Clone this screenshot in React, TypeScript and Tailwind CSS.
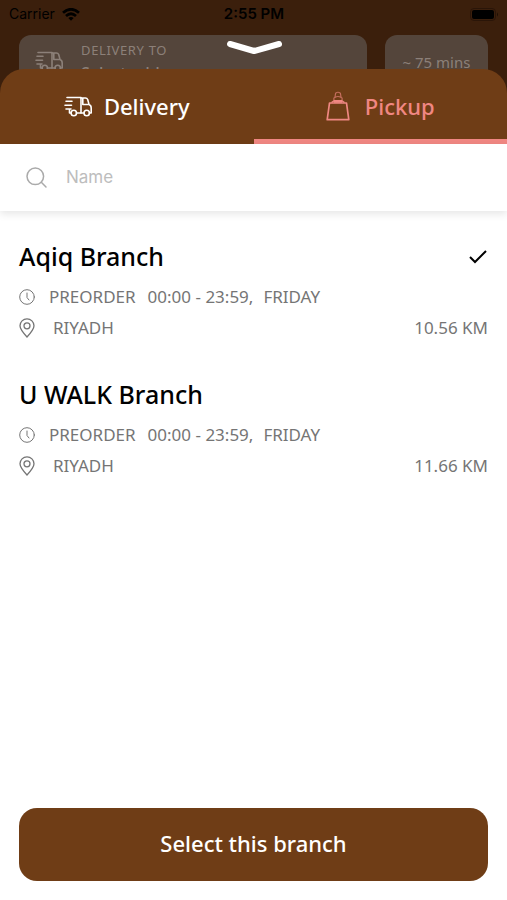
import { useState } from "react";

const branches = [
  { id: "aqiq", name: "Aqiq Branch", city: "RIYADH", hours: "00:00 - 23:59,", day: "FRIDAY", distance: "10.56 KM" },
  { id: "uwalk", name: "U WALK Branch", city: "RIYADH", hours: "00:00 - 23:59,", day: "FRIDAY", distance: "11.66 KM" },
];

function TruckIcon() {
  return (
    <svg viewBox="0 0 28 21" className="h-[21px] w-7 shrink-0" fill="none" stroke="currentColor" strokeWidth="1.6" strokeLinecap="round" strokeLinejoin="round" aria-hidden="true">
      <path d="M3 1.5H17V17H12.5M2 5.3H8M1 9.2H7.5M2 13H7M5.5 13V17H7" />
      <path d="M17 2H21.5Q23 2 23.7 3.5L25 8.4Q27.2 9.2 27.2 12V17H25.5M17 17H20M18.8 2V8.5H25" />
      <circle cx="9.8" cy="17" r="2.7" />
      <circle cx="22.7" cy="17" r="2.7" />
    </svg>
  );
}

function BagIcon() {
  return (
    <svg viewBox="0 0 24 30" className="h-[30px] w-6 shrink-0" fill="none" stroke="currentColor" strokeLinejoin="round" aria-hidden="true">
      <path d="M3.5 12H20.5L22.8 28.7H1.2Z" strokeWidth="1.7" />
      <path d="M5.5 11.5L8 9.8H16L18.5 11.5M8 11H16" strokeWidth="1.4" />
      <path d="M8.2 9.5Q7.2 7 9 6L9.6 2.3Q12 .2 14.4 2.3L15 6Q16.8 7 15.8 9.5M9 6.5Q12 4.5 15 6.5" strokeWidth="1.2" opacity=".65" />
    </svg>
  );
}

function WifiIcon() {
  return (
    <svg viewBox="0 0 18 13" className="h-[13px] w-[18px]" fill="none" stroke="currentColor" strokeWidth="2.8" aria-hidden="true">
      <path d="M1 4.8Q9-2.2 17 4.8M4 8Q9 3.6 14 8" />
      <path d="M6.3 10Q9 7.8 11.7 10L9 12.8Z" fill="currentColor" stroke="none" />
    </svg>
  );
}

function BatteryIcon() {
  return (
    <svg viewBox="0 0 29 13" className="h-[13px] w-[29px]" aria-hidden="true">
      <rect x=".5" y=".5" width="25" height="12" rx="3.5" fill="none" stroke="#2a1508" />
      <rect x="2" y="2" width="22" height="9" rx="2" fill="#000" />
      <path d="M27 4.5Q29 6.5 27 8.5Z" fill="#1d0f05" />
    </svg>
  );
}

function SearchIcon() {
  return (
    <svg viewBox="0 0 22 22" className="size-[22px] shrink-0 text-[#aaaaaa]" fill="none" stroke="currentColor" strokeWidth="1.5" strokeLinecap="round" aria-hidden="true">
      <circle cx="9.3" cy="9.3" r="8.3" />
      <path d="M15.3 15.3L20 20" />
    </svg>
  );
}

function ClockIcon() {
  return (
    <svg viewBox="0 0 16 16" className="size-4 shrink-0" fill="none" stroke="currentColor" strokeLinecap="round" aria-hidden="true">
      <circle cx="8" cy="8" r="7.3" />
      <path d="M8 4V8.5L10 11" />
    </svg>
  );
}

function PinIcon() {
  return (
    <svg viewBox="0 0 16 20" className="h-5 w-4 shrink-0" fill="none" stroke="currentColor" strokeWidth="1.3" aria-hidden="true">
      <path d="M8 19Q1 11.5 1 7.8A7 7 0 0 1 15 7.8Q15 11.5 8 19Z" />
      <circle cx="8" cy="7.8" r="3" />
    </svg>
  );
}

export default function App() {
  const [tab, setTab] = useState("pickup");
  const [selected, setSelected] = useState("aqiq");
  const [query, setQuery] = useState("");
  const tabClass = "flex flex-1 items-center justify-center border-b-[5px] pt-1 text-[22px] font-medium";

  return (
    <div className="flex min-h-screen flex-col bg-[#3b1f0c] font-['Noto_Sans',sans-serif]">
      <header className="relative">
        <div className="grid h-7 grid-cols-3 items-center pr-2 pl-[9px] font-['Inter',sans-serif] text-sm leading-7 text-black">
          <div className="flex items-center gap-[7px]">
            <span>Carrier</span>
            <WifiIcon />
          </div>
          <span className="text-center text-[15px] font-semibold">2:55 PM</span>
          <div className="flex justify-end"><BatteryIcon /></div>
        </div>
        <div className="mt-[7px] flex gap-[18px] px-[19px] text-[#8c8079]">
          <div className="flex h-[58px] flex-1 gap-[18px] rounded-xl bg-[#54453b] pl-4">
            <div className="pt-4"><TruckIcon /></div>
            <div className="pt-1.5">
              <p className="text-[13px] leading-[18px] tracking-wider">DELIVERY TO</p>
              <p className="mt-0.5 text-base font-medium">Select address</p>
            </div>
          </div>
          <div className="h-[58px] w-[103px] rounded-xl bg-[#54453b] pt-4 text-center text-[15px] leading-[22px]">~ 75 mins</div>
        </div>
        <button type="button" aria-label="Close" className="absolute top-10 left-1/2 -translate-x-1/2 text-white">
          <svg viewBox="0 0 56 15" className="h-[15px] w-14" fill="none" stroke="currentColor" strokeWidth="6" strokeLinecap="round" strokeLinejoin="round">
            <path d="M4 4L28 11L53 4" />
          </svg>
        </button>
      </header>

      <main className="relative -mt-6 flex flex-1 flex-col">
        <div role="tablist" className="flex h-[75px] overflow-hidden rounded-t-3xl bg-[#6f3d16]">
          <button type="button" role="tab" aria-selected={tab === "delivery"} onClick={() => setTab("delivery")} className={`${tabClass} gap-3 ${tab === "delivery" ? "border-[#f08782] text-[#f08782]" : "border-[#6f3d16] text-white"}`}>
            <TruckIcon />
            Delivery
          </button>
          <button type="button" role="tab" aria-selected={tab === "pickup"} onClick={() => setTab("pickup")} className={`${tabClass} gap-[15px] ${tab === "pickup" ? "border-[#f08782] text-[#f08782]" : "border-[#6f3d16] text-white"}`}>
            <BagIcon />
            Pickup
          </button>
        </div>

        <div className="flex flex-1 flex-col bg-white">
          <label className="flex h-[67px] items-center gap-[18px] px-[26px] shadow-[0_3px_8px_rgba(0,0,0,0.1)]">
            <SearchIcon />
            <input type="text" aria-label="Name" placeholder="Name" value={query} onChange={(e) => setQuery(e.target.value)} className="min-w-0 flex-1 font-['Inter',sans-serif] text-[17px] outline-none placeholder:text-[#bdbdbd]" />
          </label>

          <ul className="flex flex-1 flex-col gap-[34px] px-[19px] pt-7">
            {branches
              .filter((b) => b.name.toLowerCase().includes(query.toLowerCase()))
              .map((b) => (
                <li key={b.id}>
                  <button type="button" aria-pressed={selected === b.id} onClick={() => setSelected(b.id)} className="block w-full text-left text-[17px] text-[#757575]">
                    <span className="flex h-9 items-center justify-between text-[25px] font-medium text-black">
                      {b.name}
                      {selected === b.id && (
                        <svg viewBox="0 0 20 16" className="h-4 w-5" fill="none" stroke="currentColor" strokeWidth="2" aria-hidden="true">
                          <path d="M2 8L7 13L18 2" />
                        </svg>
                      )}
                    </span>
                    <span className="mt-1.5 flex h-8 items-center">
                      <ClockIcon />
                      <span className="ml-3.5">PREORDER</span>
                      <span className="ml-3">{b.hours}</span>
                      <span className="ml-2.5">{b.day}</span>
                    </span>
                    <span className="flex h-[30px] items-center">
                      <PinIcon />
                      <span className="ml-[18px] flex-1">{b.city}</span>
                      <span>{b.distance}</span>
                    </span>
                  </button>
                </li>
              ))}
          </ul>

          <div className="px-[19px] pb-[19px]">
            <button type="button" className="h-[73px] w-full rounded-[18px] bg-[#6f3d16] pb-0.5 text-[22px] font-medium text-white">Select this branch</button>
          </div>
        </div>
      </main>
    </div>
  );
}
